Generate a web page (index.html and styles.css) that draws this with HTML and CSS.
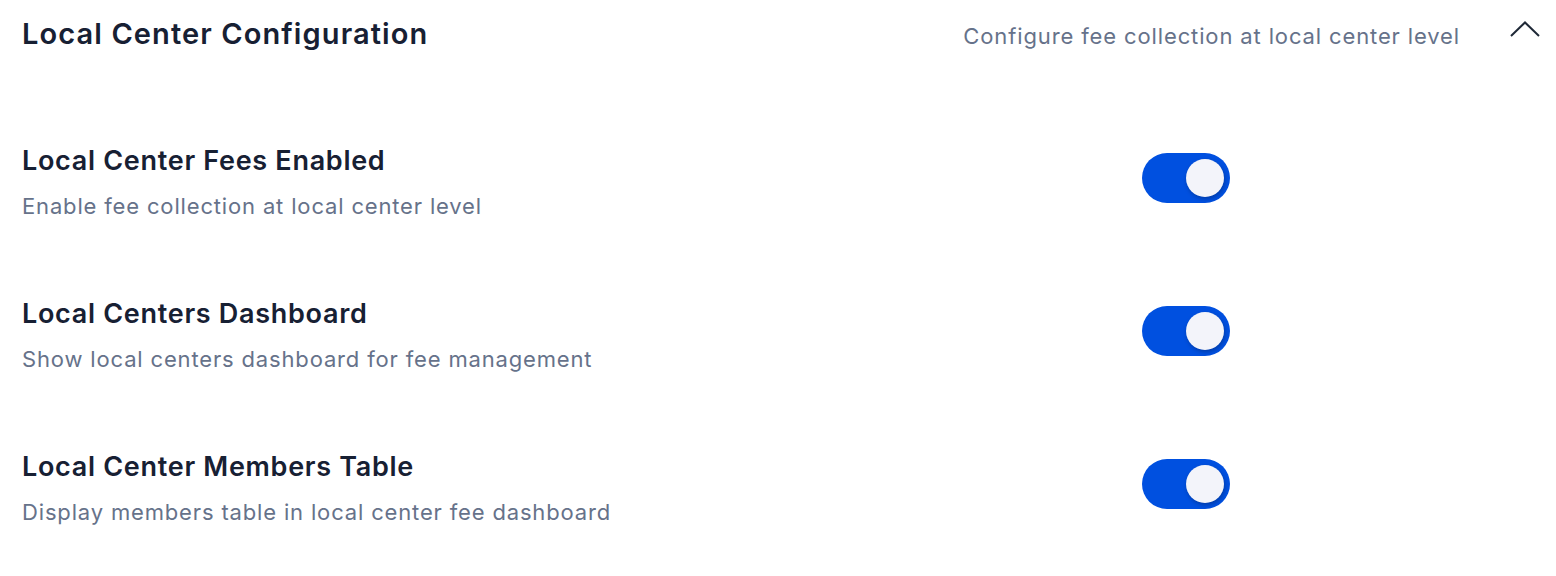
FILE: index.html
```html
<!DOCTYPE html>
<html>
<head>
<meta charset="utf-8">
<link rel="stylesheet" href="styles.css">
</head>
<body>
<div class="panel">
  <div class="header">
    <h2 class="title">Local Center Configuration</h2>
    <div class="header-right">
      <span class="subtitle">Configure fee collection at local center level</span>
      <svg class="chevron" width="30" height="16" viewBox="0 0 30 16"><path d="M1 15 L15 1.5 L29 15" fill="none" stroke="#1f2937" stroke-width="2"/></svg>
    </div>
  </div>
  <div class="rows">
    <div class="row">
      <div class="text">
        <div class="label">Local Center Fees Enabled</div>
        <div class="desc">Enable fee collection at local center level</div>
      </div>
      <div class="toggle"><span class="knob"></span></div>
    </div>
    <div class="row">
      <div class="text">
        <div class="label">Local Centers Dashboard</div>
        <div class="desc">Show local centers dashboard for fee management</div>
      </div>
      <div class="toggle"><span class="knob"></span></div>
    </div>
    <div class="row">
      <div class="text">
        <div class="label">Local Center Members Table</div>
        <div class="desc">Display members table in local center fee dashboard</div>
      </div>
      <div class="toggle"><span class="knob"></span></div>
    </div>
  </div>
</div>
</body>
</html>
```
FILE: styles.css
```css
html, body {
  margin: 0;
  padding: 0;
  background: #ffffff;
}
body {
  font-family: Inter, "Noto Sans", sans-serif;
  color: #172033;
}
.panel {
  padding: 14px 16px 0 22px;
}
.header {
  display: flex;
  justify-content: space-between;
  align-items: flex-start;
}
.title {
  margin: 0;
  font-size: 29px;
  font-weight: 600;
  line-height: 40px;
  letter-spacing: 1.1px;
  color: #172033;
}
.header-right {
  display: flex;
  align-items: flex-start;
  gap: 50px;
}
.subtitle {
  font-size: 22px;
  line-height: 28px;
  letter-spacing: 0.87px;
  color: #66728a;
  margin-top: 8px;
}
.chevron {
  margin-top: 7px;
}
.rows {
  display: flex;
  flex-direction: column;
  gap: 76px;
  margin-top: 90px;
}
.row {
  display: flex;
  align-items: flex-start;
}
.text {
  width: 1120px;
}
.label {
  font-size: 27px;
  font-weight: 600;
  line-height: 34px;
  letter-spacing: 0.7px;
  color: #172033;
}
.desc {
  font-size: 22px;
  line-height: 30px;
  letter-spacing: 0.84px;
  margin-top: 13px;
  color: #66728a;
}
.toggle {
  width: 88px;
  height: 50px;
  border-radius: 25px;
  background: #0050e0;
  position: relative;
  margin-top: 9px;
}
.knob {
  position: absolute;
  top: 6px;
  right: 6px;
  width: 38px;
  height: 38px;
  border-radius: 50%;
  background: #f3f4fa;
  box-shadow: 1px 2px 4px rgba(0, 0, 0, 0.25);
}
```
